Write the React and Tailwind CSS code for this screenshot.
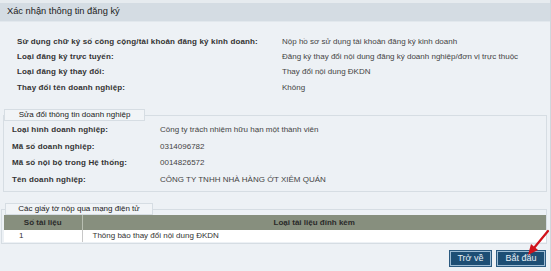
import React from "react";

const font = { fontFamily: '"Liberation Sans", Arial, sans-serif' };

function Row({ label, value }) {
  return (
    <div className="flex h-[15.3px] items-center">
      <div className="w-[265px] shrink-0 font-bold text-[#333] tracking-[0.14px]">{label}</div>
      <div className="text-[#444]">{value}</div>
    </div>
  );
}

function Row2({ label, value }) {
  return (
    <div className="flex h-[16.5px] items-center">
      <div className="w-[148px] shrink-0 font-bold text-[#333] tracking-[0.14px]">{label}</div>
      <div className="text-[#444]">{value}</div>
    </div>
  );
}

export default function App() {
  return (
    <div
      className="relative w-[551px] h-[271px] overflow-hidden bg-[#edf1f5] border-r border-[#cfd6dc] text-[8px] leading-none"
      style={font}
    >
      <div className="h-[3px] bg-[#e6ebef]" />
      <div className="flex h-[19px] items-center bg-[#d4dce3] pl-[7px] text-[9.3px] text-[#222] border-b border-[#e2e8ed]">
        Xác nhận thông tin đăng ký
      </div>

      <div className="pl-[17px] pt-[12px]">
        <Row
          label="Sử dụng chữ ký số công cộng/tài khoản đăng ký kinh doanh:"
          value="Nộp hồ sơ sử dụng tài khoản đăng ký kinh doanh"
        />
        <Row
          label="Loại đăng ký trực tuyến:"
          value="Đăng ký thay đổi nội dung đăng ký doanh nghiệp/đơn vị trực thuộc"
        />
        <Row label="Loại đăng ký thay đổi:" value="Thay đổi nội dung ĐKDN" />
        <Row label="Thay đổi tên doanh nghiệp:" value="Không" />
      </div>

      <fieldset className="ml-[3px] mr-[3px] mt-[14px] border border-[#d6dde3] px-[8px] pb-[3px]">
        <legend className="ml-[-8px] flex w-[141px] h-[12px] items-center justify-center border border-[#d6dde3] bg-[#f1f4f7] text-[#222]">
          <span>Sửa đổi thông tin doanh nghiệp</span>
        </legend>
        <div className="pt-[1px]">
          <Row2
            label="Loại hình doanh nghiệp:"
            value="Công ty trách nhiệm hữu hạn một thành viên"
          />
          <Row2 label="Mã số doanh nghiệp:" value="0314096782" />
          <Row2 label="Mã số nội bộ trong Hệ thống:" value="0014826572" />
          <Row2 label="Tên doanh nghiệp:" value="CÔNG TY TNHH NHÀ HÀNG ỚT XIÊM QUÁN" />
        </div>
      </fieldset>

      <fieldset className="ml-[1px] mr-[3px] mt-[11px] border border-[#d6dde3] pl-[2px] pb-[1px]">
        <legend className="ml-[1px] flex w-[148px] h-[12px] items-center justify-center border border-[#d6dde3] bg-[#f1f4f7] text-[#222]">
          <span>Các giấy tờ nộp qua mạng điện tử</span>
        </legend>
        <table className="w-full border-collapse">
          <thead>
            <tr className="h-[15px] bg-[#878f7e] text-[#2a2a2a] font-bold">
              <th className="w-[78px] border-r border-[#b9bfb2] font-bold">Số tài liệu</th>
              <th className="font-bold">Loại tài liệu đính kèm</th>
            </tr>
          </thead>
          <tbody>
            <tr className="h-[12px] bg-white text-[#333]">
              <td className="pl-[15px] border-r border-[#c8c8c8]">1</td>
              <td className="pl-[10px]">Thông báo thay đổi nội dung ĐKDN</td>
            </tr>
          </tbody>
        </table>
      </fieldset>

      <div className="flex justify-end gap-[6px] pr-[5px] pt-[7px]">
        <button className="h-[15px] w-[41px] border border-[#9cbbd3] bg-[#1d4e74] text-[9px] text-[#e6eef5] outline outline-1 outline-[#2b5a80]">
          Trở về
        </button>
        <button className="h-[15px] w-[48px] border border-[#9cbbd3] bg-[#1d4e74] text-[9px] text-[#e6eef5] outline outline-1 outline-[#2b5a80]">
          Bắt đầu
        </button>
      </div>

      <svg
        className="absolute left-[524px] top-[228px]"
        width="27"
        height="30"
        viewBox="0 0 27 30"
      >
        <line x1="24" y1="3" x2="10" y2="20" stroke="#d0121b" strokeWidth="2.2" strokeLinecap="round" />
        <polygon points="4,27 7,16 14,22" fill="#d0121b" />
      </svg>
    </div>
  );
}
